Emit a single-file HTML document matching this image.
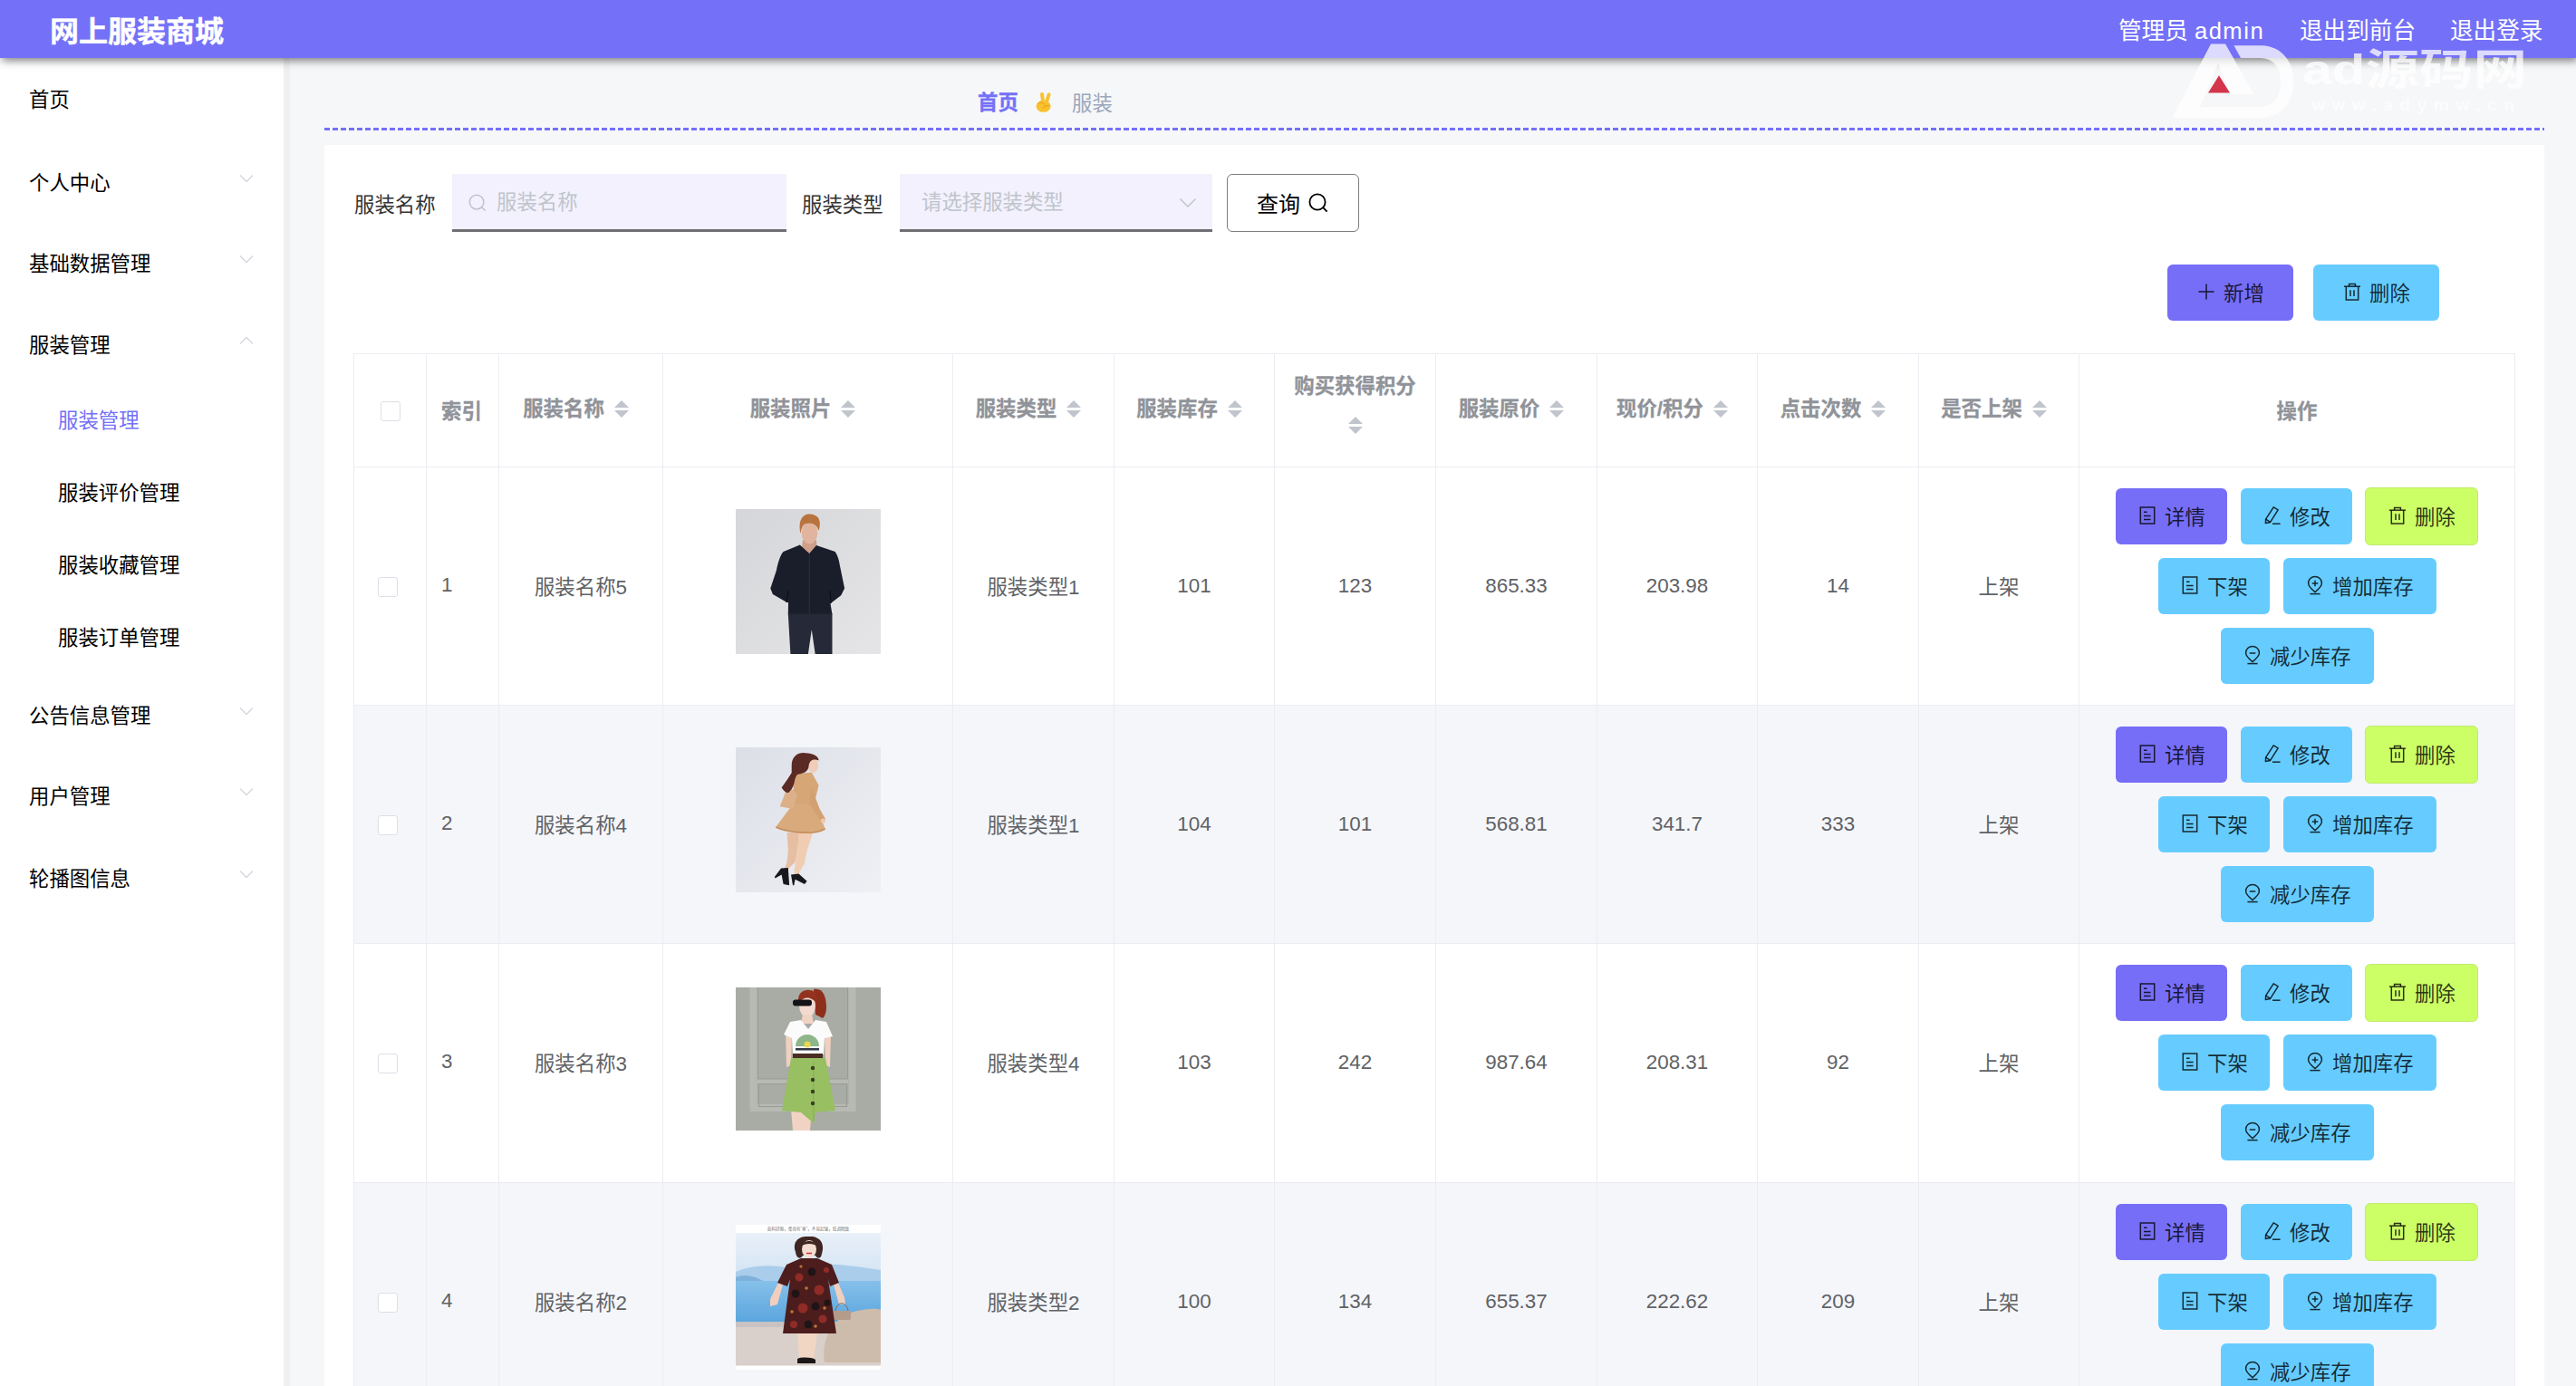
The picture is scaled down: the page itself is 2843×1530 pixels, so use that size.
<!DOCTYPE html>
<html lang="zh-CN"><head><meta charset="utf-8"><title>网上服装商城</title>
<style>
*{box-sizing:border-box;margin:0;padding:0}
html,body{background:#f6f7f9}
#page{position:relative;width:2843px;height:1530px;overflow:hidden;background:#f6f7f9}
body{font-family:"Liberation Sans","Noto Sans CJK SC",sans-serif;font-size:22.4px;color:#606266}
.abs{position:absolute;white-space:nowrap}
#hdr{position:absolute;left:0;top:0;width:2843px;height:64px;background:#7471f8;box-shadow:2px 3px 9px rgba(0,0,0,.5);z-index:5}
#title{left:55px;top:0;height:64px;line-height:70px;font-size:32px;font-weight:700;color:#fff;-webkit-text-stroke:.4px #fff}
.hr{top:0;height:64px;line-height:68px;font-size:25.6px;color:#fff}
#side{position:absolute;left:0;top:64px;width:313px;height:1466px;background:#fff}
#strip{position:absolute;left:313px;top:64px;width:7px;height:1466px;background:#f0f0f0}
.mi{left:32px;height:40px;line-height:40px;color:#000;font-size:22.4px}
.mi.sub{left:64px}
.mi.act{color:#7471f8}
.chev{position:absolute;left:264px;width:16px;height:10px}

.ic{display:inline-block;vertical-align:middle;flex:none}
#bc1{left:1079px;top:94px;height:40px;line-height:40px;font-weight:700;color:#7471f8;-webkit-text-stroke:.3px #7471f8}
#bc2{position:absolute;left:1143px;top:101px}
#bc3{left:1183px;top:94.5px;height:40px;line-height:40px;color:#9ba8bc}
#dash{position:absolute;left:358px;top:141px;width:2450px;height:3px;background:repeating-linear-gradient(90deg,#7471f8 0,#7471f8 6px,transparent 6px,transparent 9px)}
#card{position:absolute;left:358px;top:160px;width:2450px;height:1400px;background:#fff}
.lbl{top:207px;height:40px;line-height:40px;color:#333}
.inp{position:absolute;top:192px;height:64px;background:#f2f1fd;border-bottom:3px solid #707074;color:#c0c4cc;white-space:nowrap}
.inp span{position:absolute;top:12px;height:40px;line-height:40px}
#qbtn{position:absolute;left:1354px;top:192px;width:146px;height:64px;border:1px solid #7d7d7d;border-radius:6px;background:#fff;color:#000;font-size:24px}
.btn{position:absolute;height:62px;border-radius:6px;color:rgba(0,0,0,.8);display:flex;align-items:center;padding-left:24px;white-space:nowrap}
.btn .ic{margin-right:8px;position:relative;top:-1px}
.btn span,.tbtn span{position:relative;top:-1.5px}
.b1{background:#766ef7}.b2{background:#66ccff}.b3{background:#ccff66}

.vl{position:absolute;width:1px;background:#ebedf2;top:390px;height:1140px}
.hl{position:absolute;height:1px;background:#ebedf2;left:390px;width:2386px}
.stripe{position:absolute;left:391px;width:2384px;background:#f5f6fa}
.th{position:absolute;display:flex;align-items:center;justify-content:center;font-weight:700;color:#909399;white-space:nowrap;height:40px;line-height:42px;-webkit-text-stroke:.3px #909399}
.car{display:inline-block;position:relative;width:38px;height:40px;flex:none}
.car i{position:absolute;left:11px;width:0;height:0;border:8px solid transparent}
.car i.u{border-bottom-color:#c0c4cc;top:2px}
.car i.d{border-top-color:#c0c4cc;top:21px}
.td{position:absolute;text-align:center;height:40px;line-height:40px;white-space:nowrap;color:#606266}
.cb{position:absolute;width:22px;height:22px;border:1px solid #dcdfe6;border-radius:3px;background:#fff}
.pic{position:absolute;left:812px;width:160px;height:160px;overflow:hidden}
.tbtn{position:absolute;height:62px;border-radius:6px;color:rgba(0,0,0,.8);display:flex;align-items:center;padding-left:24px;white-space:nowrap}
.tbtn .ic{margin-right:8px;margin-left:0;position:relative;top:-1px}

#wm{position:absolute;left:2390px;top:44px;z-index:9;pointer-events:none}
</style></head>
<body>
<div id="page">
<div id="side">
 <div class="abs mi " style="top:27.0px">首页</div>
 <div class="abs mi " style="top:118.5px">个人中心</div>
 <svg class="chev" style="top:127.5px" viewBox="0 0 16 10"><path d="M1 1.5 L8 8.5 L15 1.5" fill="none" stroke="#d3d6dc" stroke-width="1.3"/></svg>
 <div class="abs mi " style="top:208.0px">基础数据管理</div>
 <svg class="chev" style="top:217.0px" viewBox="0 0 16 10"><path d="M1 1.5 L8 8.5 L15 1.5" fill="none" stroke="#d3d6dc" stroke-width="1.3"/></svg>
 <div class="abs mi " style="top:298.0px">服装管理</div>
 <svg class="chev" style="top:307.0px" viewBox="0 0 16 10"><path d="M1 8.5 L8 1.5 L15 8.5" fill="none" stroke="#d3d6dc" stroke-width="1.3"/></svg>
 <div class="abs mi sub act" style="top:381.0px">服装管理</div>
 <div class="abs mi sub" style="top:461.0px">服装评价管理</div>
 <div class="abs mi sub" style="top:541.0px">服装收藏管理</div>
 <div class="abs mi sub" style="top:621.0px">服装订单管理</div>
 <div class="abs mi " style="top:706.5px">公告信息管理</div>
 <svg class="chev" style="top:715.5px" viewBox="0 0 16 10"><path d="M1 1.5 L8 8.5 L15 1.5" fill="none" stroke="#d3d6dc" stroke-width="1.3"/></svg>
 <div class="abs mi " style="top:796.0px">用户管理</div>
 <svg class="chev" style="top:805.0px" viewBox="0 0 16 10"><path d="M1 1.5 L8 8.5 L15 1.5" fill="none" stroke="#d3d6dc" stroke-width="1.3"/></svg>
 <div class="abs mi " style="top:886.5px">轮播图信息</div>
 <svg class="chev" style="top:895.5px" viewBox="0 0 16 10"><path d="M1 1.5 L8 8.5 L15 1.5" fill="none" stroke="#d3d6dc" stroke-width="1.3"/></svg>
</div>
<div id="strip"></div>

<div class="abs" id="bc1">首页</div>
<svg id="bc2" width="18" height="23" viewBox="0 0 18 23"><g stroke="#f9c12e" stroke-width="3.900" stroke-linecap="round"><path d="M8.300 13 L7 3"/><path d="M11.500 13 L14.600 3.400"/></g><ellipse cx="8.600" cy="16.300" rx="8" ry="6.500" fill="#f9c12e"/><path d="M2.500 13.500 C5 11.500 8 12 9.500 14.500 M8 18.500 C9.500 16 12 15 15 16" fill="none" stroke="#e29a14" stroke-width="1"/></svg>
<div class="abs" id="bc3">服装</div>
<div id="dash"></div>
<div id="card"></div>
<div class="abs lbl" style="left:391px">服装名称</div>
<div class="inp" style="left:499px;width:369px"><svg class="ic" style="position:absolute;left:18px;top:22px" width="20" height="20" viewBox="0 0 22 22" style=""><g fill="none" stroke="#c0c4cc" stroke-width="1.7"><circle cx="10" cy="10" r="8.6"/><path d="M16.2 16.2 L20.6 20.6"/></g></svg><span style="left:49px">服装名称</span></div>
<div class="abs lbl" style="left:885px">服装类型</div>
<div class="inp" style="left:993px;width:345px"><span style="left:24px">请选择服装类型</span><svg style="position:absolute;left:308px;top:26px" width="20" height="12" viewBox="0 0 20 12"><path d="M1.5 1.5 L10 10 L18.5 1.5" fill="none" stroke="#c0c4cc" stroke-width="1.5"/></svg></div>
<div id="qbtn"><span class="abs" style="left:32px;top:12.5px;height:40px;line-height:40px">查询</span><svg class="ic" style="position:absolute;left:89px;top:20px" width="22" height="22" viewBox="0 0 22 22" style=""><g fill="none" stroke="#000" stroke-width="1.8"><circle cx="10" cy="10" r="8.6"/><path d="M16.2 16.2 L20.6 20.6"/></g></svg></div>
<div class="btn b1" style="left:2392px;top:292px;width:139px;padding-left:32px"><svg class="ic" width="22" height="22" viewBox="0 0 22 22" style=""><path d="M11 2.5V19.5M2.5 11H19.5" fill="none" stroke="rgba(0,0,0,.8)" stroke-width="1.5"/></svg><span>新增</span></div>
<div class="btn b2" style="left:2553px;top:292px;width:139px;padding-left:32px"><svg class="ic" width="22" height="22" viewBox="0 0 22 22" style=""><g fill="none" stroke="rgba(0,0,0,.8)" stroke-width="1.5"><path d="M2 5.2H20"/><path d="M7.6 5V2.4H14.4V5"/><path d="M4.3 5.4V20H17.7V5.4"/><path d="M9 9.3V16M13 9.3V16"/></g></svg><span>删除</span></div>
<div class="stripe" style="top:779px;height:262px"></div>
<div class="stripe" style="top:1306px;height:262px"></div>
<div class="vl" style="left:390px"></div><div class="vl" style="left:470px"></div><div class="vl" style="left:550px"></div><div class="vl" style="left:731px"></div><div class="vl" style="left:1051px"></div><div class="vl" style="left:1229px"></div><div class="vl" style="left:1406px"></div><div class="vl" style="left:1584px"></div><div class="vl" style="left:1762px"></div><div class="vl" style="left:1939px"></div><div class="vl" style="left:2117px"></div><div class="vl" style="left:2294px"></div><div class="vl" style="left:2775px"></div>
<div class="hl" style="top:390px"></div><div class="hl" style="top:515px"></div><div class="hl" style="top:778px"></div><div class="hl" style="top:1041px"></div><div class="hl" style="top:1305px"></div>
<div class="cb" style="left:420px;top:443px"></div>
<div class="th" style="left:487px;top:435px;justify-content:flex-start">索引</div>
<div class="th" style="left:551px;width:180px;top:431.5px"><span>服装名称</span><span class="car"><i class="u"></i><i class="d"></i></span></div>
<div class="th" style="left:732px;width:319px;top:431.5px"><span>服装照片</span><span class="car"><i class="u"></i><i class="d"></i></span></div>
<div class="th" style="left:1052px;width:177px;top:431.5px"><span>服装类型</span><span class="car"><i class="u"></i><i class="d"></i></span></div>
<div class="th" style="left:1230px;width:176px;top:431.5px"><span>服装库存</span><span class="car"><i class="u"></i><i class="d"></i></span></div>
<div class="th" style="left:1407px;width:177px;top:406.5px">购买获得积分</div>
<div class="th" style="left:1407px;width:177px;top:449.5px"><span class="car"><i class="u"></i><i class="d"></i></span></div>
<div class="th" style="left:1585px;width:177px;top:431.5px"><span>服装原价</span><span class="car"><i class="u"></i><i class="d"></i></span></div>
<div class="th" style="left:1763px;width:176px;top:431.5px"><span>现价/积分</span><span class="car"><i class="u"></i><i class="d"></i></span></div>
<div class="th" style="left:1940px;width:177px;top:431.5px"><span>点击次数</span><span class="car"><i class="u"></i><i class="d"></i></span></div>
<div class="th" style="left:2118px;width:176px;top:431.5px"><span>是否上架</span><span class="car"><i class="u"></i><i class="d"></i></span></div>
<div class="th" style="left:2295px;width:480px;top:435px">操作</div>
<div class="cb" style="left:417px;top:637px"></div>
<div class="td" style="left:487px;top:626px;text-align:left">1</div>
<div class="td" style="left:551px;width:180px;top:629px">服装名称5</div>
<div class="td" style="left:1052px;width:177px;top:629px">服装类型1</div>
<div class="td" style="left:1230px;width:176px;top:627.3px">101</div>
<div class="td" style="left:1407px;width:177px;top:627.3px">123</div>
<div class="td" style="left:1585px;width:177px;top:627.3px">865.33</div>
<div class="td" style="left:1763px;width:176px;top:627.3px">203.98</div>
<div class="td" style="left:1940px;width:177px;top:627.3px">14</div>
<div class="td" style="left:2118px;width:176px;top:629px">上架</div>
<div class="pic" style="top:562px;height:160px"><svg width="160" height="160" viewBox="0 0 160 160" preserveAspectRatio="none" style="display:block;width:100%;height:100%">
<defs><linearGradient id="g1" x1="0" y1="0" x2="1" y2="1"><stop offset="0" stop-color="#d5d6d9"/><stop offset="1" stop-color="#e5e5e7"/></linearGradient></defs>
<rect width="160" height="160" fill="url(#g1)"/>
<path d="M74 34 L89 34 L90 50 L72 50Z" fill="#cf9f8a"/>
<ellipse cx="81.500" cy="26" rx="8.800" ry="12.500" fill="#e0b49f"/>
<path d="M71.500 27 C68 10 76 5 82 5.600 C92 6 95 14 91.500 24 C90 17 84 14 77 16 C73 18 72.500 22 71.500 27Z" fill="#b8733f"/>
<path d="M70.800 39.400 L81.200 49 L89 40 L109.700 47.100 C113 52 114 57 115 62.700 L120.100 87.400 L116.200 95.200 L104.500 104.300 L106.500 116.600 L57.800 116.600 L58 103 L56.500 103 L40.900 93.900 L38.300 87.400 L44.800 67.900 C47 58 49 51 52.600 47.100 Z" fill="#1a1d2a"/>
<path d="M81.200 49 V116" stroke="#2a2f40" stroke-width="1"/>
<path d="M58 90 L56 103 M104 90 L105 104" stroke="#0e1018" stroke-width="1.200"/>
<path d="M57.800 115.600 H106.500 V160 H87.700 L83.800 132.900 L79.900 160 H60.400 Z" fill="#262937"/>
</svg></div>
<div class="tbtn b1" style="left:2335px;top:539px;width:123px"><svg class="ic" width="22" height="22" viewBox="0 0 22 22" style=""><g fill="none" stroke="rgba(0,0,0,.8)" stroke-width="1.5"><rect x="3.3" y="2" width="15.4" height="18"/><path d="M7 7.3H10.6M7 11.4H14.6M7 15.5H14.6"/></g></svg><span>详情</span></div>
<div class="tbtn b2" style="left:2473px;top:539px;width:123px"><svg class="ic" width="22" height="22" viewBox="0 0 22 22" style=""><g fill="none" stroke="rgba(0,0,0,.8)" stroke-width="1.5" stroke-linejoin="round"><path d="M12.2 1.8 L17.2 4.8 L8.6 18.4 L3.4 19.6 L3.6 15.2 Z"/><path d="M3.6 15.2 L8.6 18.4"/><path d="M11 20.2H19.6"/></g></svg><span>修改</span></div>
<div class="tbtn b3" style="left:2610px;top:538px;width:125px;height:64px;border:1px solid #c2ea6c"><svg class="ic" width="22" height="22" viewBox="0 0 22 22" style=""><g fill="none" stroke="rgba(0,0,0,.8)" stroke-width="1.5"><path d="M2 5.2H20"/><path d="M7.6 5V2.4H14.4V5"/><path d="M4.3 5.4V20H17.7V5.4"/><path d="M9 9.3V16M13 9.3V16"/></g></svg><span>删除</span></div>
<div class="tbtn b2" style="left:2382px;top:616px;width:123px"><svg class="ic" width="22" height="22" viewBox="0 0 22 22" style=""><g fill="none" stroke="rgba(0,0,0,.8)" stroke-width="1.5"><rect x="3.3" y="2" width="15.4" height="18"/><path d="M7 7.3H10.6M7 11.4H14.6M7 15.5H14.6"/></g></svg><span>下架</span></div>
<div class="tbtn b2" style="left:2520px;top:616px;width:168.5px"><svg class="ic" width="22" height="22" viewBox="0 0 22 22" style=""><g fill="none" stroke="rgba(0,0,0,.8)" stroke-width="1.5"><path d="M11 18.6 C7 15.4 3.6 12.6 3.6 8.8 A7.4 7.4 0 0 1 18.4 8.8 C18.4 12.6 15 15.4 11 18.6Z"/><path d="M11 5.7V12.3M7.7 9H14.3"/><path d="M5.4 20.6H16.6"/></g></svg><span>增加库存</span></div>
<div class="tbtn b2" style="left:2451px;top:693px;width:168.5px"><svg class="ic" width="22" height="22" viewBox="0 0 22 22" style=""><g fill="none" stroke="rgba(0,0,0,.8)" stroke-width="1.5"><path d="M11 18.6 C7 15.4 3.6 12.6 3.6 8.8 A7.4 7.4 0 0 1 18.4 8.8 C18.4 12.6 15 15.4 11 18.6Z"/><path d="M7.7 9H14.3"/><path d="M5.4 20.6H16.6"/></g></svg><span>减少库存</span></div>
<div class="cb" style="left:417px;top:900px"></div>
<div class="td" style="left:487px;top:889px;text-align:left">2</div>
<div class="td" style="left:551px;width:180px;top:892px">服装名称4</div>
<div class="td" style="left:1052px;width:177px;top:892px">服装类型1</div>
<div class="td" style="left:1230px;width:176px;top:890.3px">104</div>
<div class="td" style="left:1407px;width:177px;top:890.3px">101</div>
<div class="td" style="left:1585px;width:177px;top:890.3px">568.81</div>
<div class="td" style="left:1763px;width:176px;top:890.3px">341.7</div>
<div class="td" style="left:1940px;width:177px;top:890.3px">333</div>
<div class="td" style="left:2118px;width:176px;top:892px">上架</div>
<div class="pic" style="top:825px;height:160px"><svg width="160" height="160" viewBox="0 0 160 160" preserveAspectRatio="none" style="display:block;width:100%;height:100%">
<defs><linearGradient id="g2" x1="0" y1="0" x2="1" y2="1"><stop offset="0" stop-color="#dcdfe7"/><stop offset="1" stop-color="#eff0f4"/></linearGradient></defs>
<rect width="160" height="160" fill="url(#g2)"/>
<path d="M56.500 93.900 L70.800 93.900 L68.200 113.400 L65.600 126.400 L57.800 134.200 L53.900 134.200 L56.500 126.400 L57.800 113.400Z" fill="#e6bfa2"/>
<path d="M69.500 93.900 L85 93.900 L78.600 114.700 L76 127.700 L69.500 139.400 L64.300 139.400 L65.600 127.700 L68.200 114.700Z" fill="#f0cdb2"/>
<path d="M63 62.700 L87.700 62.700 L98.700 90 C90 95 80 94.500 70.800 93.900 C60 93 50 91 44.200 88 Z" fill="#d9aa7c"/>
<path d="M44.200 88 C50 91 60 93 70.800 93.900 C80 94.500 90 95 98.700 90" fill="none" stroke="#c48e5e" stroke-width="1.600"/>
<path d="M64.300 29 L83.800 27.700 L91.600 42 L87.700 57.500 L87.700 63 L63 63 L63 57.500 Z" fill="#d6a676"/>
<path d="M57.800 42 L68.200 52.300 L63 68 L48.700 65.300Z" fill="#dcb088"/>
<path d="M83.800 44.600 L92.700 68 L99.200 79.600 L94 80.900 L81.200 62.700Z" fill="#d3a171"/>
<circle cx="96.500" cy="81" r="2.600" fill="#eec9b0"/>
<ellipse cx="85.500" cy="20" rx="5.600" ry="8" fill="#f1cdb8"/>
<path d="M61.700 22 C61 9 70 5.500 76 6.200 C85 6 92 10 91.600 14.500 C86 12 81 14 80.500 21 C80 27 74 29 68 30 C64 34 66 42 60 48 C58 52 54 50 50.600 44.500 C54 40 58 34 61.700 28Z" fill="#5a2a24"/>
<path d="M50 133.500 L57.800 132.900 L59.100 152.300 L52.600 151 L50.600 140.600 L43.500 144.500 L42.900 143 Z" fill="#17171c"/>
<path d="M61 140.600 L69.500 139.400 L78.600 147.800 L76 151 L65.600 145.800 L64.300 152.300 L63 152.300 Z" fill="#17171c"/>
</svg></div>
<div class="tbtn b1" style="left:2335px;top:802px;width:123px"><svg class="ic" width="22" height="22" viewBox="0 0 22 22" style=""><g fill="none" stroke="rgba(0,0,0,.8)" stroke-width="1.5"><rect x="3.3" y="2" width="15.4" height="18"/><path d="M7 7.3H10.6M7 11.4H14.6M7 15.5H14.6"/></g></svg><span>详情</span></div>
<div class="tbtn b2" style="left:2473px;top:802px;width:123px"><svg class="ic" width="22" height="22" viewBox="0 0 22 22" style=""><g fill="none" stroke="rgba(0,0,0,.8)" stroke-width="1.5" stroke-linejoin="round"><path d="M12.2 1.8 L17.2 4.8 L8.6 18.4 L3.4 19.6 L3.6 15.2 Z"/><path d="M3.6 15.2 L8.6 18.4"/><path d="M11 20.2H19.6"/></g></svg><span>修改</span></div>
<div class="tbtn b3" style="left:2610px;top:801px;width:125px;height:64px;border:1px solid #c2ea6c"><svg class="ic" width="22" height="22" viewBox="0 0 22 22" style=""><g fill="none" stroke="rgba(0,0,0,.8)" stroke-width="1.5"><path d="M2 5.2H20"/><path d="M7.6 5V2.4H14.4V5"/><path d="M4.3 5.4V20H17.7V5.4"/><path d="M9 9.3V16M13 9.3V16"/></g></svg><span>删除</span></div>
<div class="tbtn b2" style="left:2382px;top:879px;width:123px"><svg class="ic" width="22" height="22" viewBox="0 0 22 22" style=""><g fill="none" stroke="rgba(0,0,0,.8)" stroke-width="1.5"><rect x="3.3" y="2" width="15.4" height="18"/><path d="M7 7.3H10.6M7 11.4H14.6M7 15.5H14.6"/></g></svg><span>下架</span></div>
<div class="tbtn b2" style="left:2520px;top:879px;width:168.5px"><svg class="ic" width="22" height="22" viewBox="0 0 22 22" style=""><g fill="none" stroke="rgba(0,0,0,.8)" stroke-width="1.5"><path d="M11 18.6 C7 15.4 3.6 12.6 3.6 8.8 A7.4 7.4 0 0 1 18.4 8.8 C18.4 12.6 15 15.4 11 18.6Z"/><path d="M11 5.7V12.3M7.7 9H14.3"/><path d="M5.4 20.6H16.6"/></g></svg><span>增加库存</span></div>
<div class="tbtn b2" style="left:2451px;top:956px;width:168.5px"><svg class="ic" width="22" height="22" viewBox="0 0 22 22" style=""><g fill="none" stroke="rgba(0,0,0,.8)" stroke-width="1.5"><path d="M11 18.6 C7 15.4 3.6 12.6 3.6 8.8 A7.4 7.4 0 0 1 18.4 8.8 C18.4 12.6 15 15.4 11 18.6Z"/><path d="M7.7 9H14.3"/><path d="M5.4 20.6H16.6"/></g></svg><span>减少库存</span></div>
<div class="cb" style="left:417px;top:1163px"></div>
<div class="td" style="left:487px;top:1152px;text-align:left">3</div>
<div class="td" style="left:551px;width:180px;top:1155px">服装名称3</div>
<div class="td" style="left:1052px;width:177px;top:1155px">服装类型4</div>
<div class="td" style="left:1230px;width:176px;top:1153.3px">103</div>
<div class="td" style="left:1407px;width:177px;top:1153.3px">242</div>
<div class="td" style="left:1585px;width:177px;top:1153.3px">987.64</div>
<div class="td" style="left:1763px;width:176px;top:1153.3px">208.31</div>
<div class="td" style="left:1940px;width:177px;top:1153.3px">92</div>
<div class="td" style="left:2118px;width:176px;top:1155px">上架</div>
<div class="pic" style="top:1090px;height:158px"><svg width="160" height="158" viewBox="0 0 160 158" preserveAspectRatio="none" style="display:block;width:100%;height:100%">
<rect width="160" height="158" fill="#a8aca5"/>
<rect x="19.500" y="-10" width="109" height="143" fill="none" stroke="#b6bab3" stroke-width="8"/>
<path d="M24 103.500 H124" stroke="#b6bab3" stroke-width="5"/>
<rect x="24.500" y="-10" width="99" height="111" fill="none" stroke="#979b94" stroke-width="1"/>
<rect x="25.500" y="106.500" width="97" height="25" fill="none" stroke="#979b94" stroke-width="1"/>
<path d="M61 134 H84 L82 158 H63Z" fill="#f1d3c4"/>
<path d="M55 50 L62 50 L61 86 L56 88Z M98 50 L105 52 L104 88 L99 86Z" fill="#f0d0c0"/>
<path d="M86 2 C96 0 100 10 100 22 C100 28 98 32 96 34 L88 30Z" fill="#8e2f1c"/>
<ellipse cx="79" cy="20" rx="9" ry="13" fill="#f3d9cf"/>
<path d="M69 14 C69 2 82 0 88 6 C90 10 90 14 88 16 C82 10 76 10 70 16Z" fill="#93321f"/>
<path d="M74 30 L84 30 L86 40 L72 40Z" fill="#f1d3c4"/>
<rect x="63" y="13.500" width="21" height="7" rx="3" fill="#141418"/>
<path d="M53 52 L60 38 L72 36 L80 46 L88 36 L100 38 L107 54 L98 56 L97 74 H63 L62 56 Z" fill="#fbfbfb"/>
<path d="M66 65 A13 13 0 0 1 92 65Z" fill="#8fb58a"/>
<circle cx="79" cy="63" r="3.500" fill="#e8d84a"/>
<rect x="66" y="67" width="26" height="2.500" fill="#333a4a"/>
<rect x="63" y="73" width="33" height="5" fill="#4a2d23"/>
<path d="M61 78 H99 L110 136 L88 138 L86 150 L72 138 L51 136 Z" fill="#98bf62"/>
<path d="M86 82 V148" stroke="#86ad52" stroke-width="1"/>
<g fill="#36401f"><circle cx="85" cy="89" r="2.200"/><circle cx="85" cy="102" r="2.200"/><circle cx="85" cy="115" r="2.200"/><circle cx="85" cy="128" r="2.200"/></g>
</svg></div>
<div class="tbtn b1" style="left:2335px;top:1065px;width:123px"><svg class="ic" width="22" height="22" viewBox="0 0 22 22" style=""><g fill="none" stroke="rgba(0,0,0,.8)" stroke-width="1.5"><rect x="3.3" y="2" width="15.4" height="18"/><path d="M7 7.3H10.6M7 11.4H14.6M7 15.5H14.6"/></g></svg><span>详情</span></div>
<div class="tbtn b2" style="left:2473px;top:1065px;width:123px"><svg class="ic" width="22" height="22" viewBox="0 0 22 22" style=""><g fill="none" stroke="rgba(0,0,0,.8)" stroke-width="1.5" stroke-linejoin="round"><path d="M12.2 1.8 L17.2 4.8 L8.6 18.4 L3.4 19.6 L3.6 15.2 Z"/><path d="M3.6 15.2 L8.6 18.4"/><path d="M11 20.2H19.6"/></g></svg><span>修改</span></div>
<div class="tbtn b3" style="left:2610px;top:1064px;width:125px;height:64px;border:1px solid #c2ea6c"><svg class="ic" width="22" height="22" viewBox="0 0 22 22" style=""><g fill="none" stroke="rgba(0,0,0,.8)" stroke-width="1.5"><path d="M2 5.2H20"/><path d="M7.6 5V2.4H14.4V5"/><path d="M4.3 5.4V20H17.7V5.4"/><path d="M9 9.3V16M13 9.3V16"/></g></svg><span>删除</span></div>
<div class="tbtn b2" style="left:2382px;top:1142px;width:123px"><svg class="ic" width="22" height="22" viewBox="0 0 22 22" style=""><g fill="none" stroke="rgba(0,0,0,.8)" stroke-width="1.5"><rect x="3.3" y="2" width="15.4" height="18"/><path d="M7 7.3H10.6M7 11.4H14.6M7 15.5H14.6"/></g></svg><span>下架</span></div>
<div class="tbtn b2" style="left:2520px;top:1142px;width:168.5px"><svg class="ic" width="22" height="22" viewBox="0 0 22 22" style=""><g fill="none" stroke="rgba(0,0,0,.8)" stroke-width="1.5"><path d="M11 18.6 C7 15.4 3.6 12.6 3.6 8.8 A7.4 7.4 0 0 1 18.4 8.8 C18.4 12.6 15 15.4 11 18.6Z"/><path d="M11 5.7V12.3M7.7 9H14.3"/><path d="M5.4 20.6H16.6"/></g></svg><span>增加库存</span></div>
<div class="tbtn b2" style="left:2451px;top:1219px;width:168.5px"><svg class="ic" width="22" height="22" viewBox="0 0 22 22" style=""><g fill="none" stroke="rgba(0,0,0,.8)" stroke-width="1.5"><path d="M11 18.6 C7 15.4 3.6 12.6 3.6 8.8 A7.4 7.4 0 0 1 18.4 8.8 C18.4 12.6 15 15.4 11 18.6Z"/><path d="M7.7 9H14.3"/><path d="M5.4 20.6H16.6"/></g></svg><span>减少库存</span></div>
<div class="cb" style="left:417px;top:1427px"></div>
<div class="td" style="left:487px;top:1416px;text-align:left">4</div>
<div class="td" style="left:551px;width:180px;top:1419px">服装名称2</div>
<div class="td" style="left:1052px;width:177px;top:1419px">服装类型2</div>
<div class="td" style="left:1230px;width:176px;top:1417.3px">100</div>
<div class="td" style="left:1407px;width:177px;top:1417.3px">134</div>
<div class="td" style="left:1585px;width:177px;top:1417.3px">655.37</div>
<div class="td" style="left:1763px;width:176px;top:1417.3px">222.62</div>
<div class="td" style="left:1940px;width:177px;top:1417.3px">209</div>
<div class="td" style="left:2118px;width:176px;top:1419px">上架</div>
<div class="pic" style="top:1352px;height:160px"><svg width="160" height="160" viewBox="0 0 160 160" preserveAspectRatio="none" style="display:block;width:100%;height:100%">
<defs><linearGradient id="g4s" x1="0" y1="0" x2="0" y2="1"><stop offset="0" stop-color="#e9f0f8"/><stop offset="1" stop-color="#d3e4f4"/></linearGradient>
<linearGradient id="g4w" x1="0" y1="0" x2="0" y2="1"><stop offset="0" stop-color="#86c0ea"/><stop offset="1" stop-color="#5aa5de"/></linearGradient></defs>
<rect width="160" height="160" fill="#fff"/>
<text x="80" y="5.800" font-size="4.600" fill="#777" text-anchor="middle" font-family="'Liberation Sans','Noto Sans CJK SC',sans-serif">面料舒服，柔而有“垂”，不易起皱，低调精致</text>
<rect y="9" width="160" height="48" fill="url(#g4s)"/>
<path d="M0 52 C20 44 40 44 60 48 C90 40 120 44 160 50 V62 H0Z" fill="#a9cdea"/>
<path d="M0 58 C10 54 20 56 30 62 H0Z" fill="#7fb1dc"/>
<rect y="62" width="160" height="46" fill="url(#g4w)"/>
<rect y="107" width="160" height="48.500" fill="#d9d0cb"/>
<rect y="107" width="160" height="6" fill="#c8c3c2"/>
<path d="M98 152 C94 130 104 104 130 96 C146 92 156 92 160 94 V152Z" fill="#cdbcab"/>
<path d="M68 120 H90 L86 148 H70Z" fill="#f1d6c4"/>
<path d="M68 148 C72 146 84 146 88 149 L88 153 H68Z" fill="#1d1718"/>
<path d="M47 64 L52 66 L46 88 L38 90 L38 82Z M113 64 L108 66 L114 88 L121 88 L120 80Z" fill="#f0cfbf"/>
<rect x="107" y="95" width="20" height="10" rx="2" fill="#b59c8a"/>
<path d="M110 95 C112 84 122 84 124 95" fill="none" stroke="#7a6a60" stroke-width="1"/>
<path d="M66 30 C62 18 70 12 81 13 C92 12 99 20 95 32 C94 38 90 38 88 34 L74 34 C72 38 67 38 66 30Z" fill="#3f2622"/>
<ellipse cx="81" cy="27" rx="8" ry="10" fill="#f4dcd0"/>
<path d="M72 24 C74 16 88 16 90 24 C86 20 76 20 72 24Z" fill="#3f2622"/>
<path d="M78 31.500 H84" stroke="#c82a2a" stroke-width="1.400"/>
<path d="M72 37 L90 37 L106 44 L114 64 L104 68 L102 60 L111 120 L52 120 L60 60 L57 68 L46 64 L56 44 Z" fill="#4d1d1e"/>
<g fill="#8f2c27"><circle cx="70" cy="58" r="4.500"/><circle cx="92" cy="72" r="5.500"/><circle cx="74" cy="92" r="5.500"/><circle cx="96" cy="104" r="4.500"/><circle cx="64" cy="110" r="4"/><circle cx="100" cy="50" r="3"/></g>
<g fill="#1f1416"><circle cx="84" cy="52" r="4.500"/><circle cx="66" cy="76" r="4.500"/><circle cx="88" cy="90" r="4.500"/><circle cx="80" cy="110" r="4.500"/><circle cx="101" cy="86" r="3.500"/></g>
<g fill="#b8783a"><circle cx="78" cy="70" r="1.800"/><circle cx="98" cy="92" r="1.800"/><circle cx="62" cy="96" r="1.800"/><circle cx="88" cy="112" r="1.800"/><circle cx="72" cy="46" r="1.600"/></g>
</svg></div>
<div class="tbtn b1" style="left:2335px;top:1329px;width:123px"><svg class="ic" width="22" height="22" viewBox="0 0 22 22" style=""><g fill="none" stroke="rgba(0,0,0,.8)" stroke-width="1.5"><rect x="3.3" y="2" width="15.4" height="18"/><path d="M7 7.3H10.6M7 11.4H14.6M7 15.5H14.6"/></g></svg><span>详情</span></div>
<div class="tbtn b2" style="left:2473px;top:1329px;width:123px"><svg class="ic" width="22" height="22" viewBox="0 0 22 22" style=""><g fill="none" stroke="rgba(0,0,0,.8)" stroke-width="1.5" stroke-linejoin="round"><path d="M12.2 1.8 L17.2 4.8 L8.6 18.4 L3.4 19.6 L3.6 15.2 Z"/><path d="M3.6 15.2 L8.6 18.4"/><path d="M11 20.2H19.6"/></g></svg><span>修改</span></div>
<div class="tbtn b3" style="left:2610px;top:1328px;width:125px;height:64px;border:1px solid #c2ea6c"><svg class="ic" width="22" height="22" viewBox="0 0 22 22" style=""><g fill="none" stroke="rgba(0,0,0,.8)" stroke-width="1.5"><path d="M2 5.2H20"/><path d="M7.6 5V2.4H14.4V5"/><path d="M4.3 5.4V20H17.7V5.4"/><path d="M9 9.3V16M13 9.3V16"/></g></svg><span>删除</span></div>
<div class="tbtn b2" style="left:2382px;top:1406px;width:123px"><svg class="ic" width="22" height="22" viewBox="0 0 22 22" style=""><g fill="none" stroke="rgba(0,0,0,.8)" stroke-width="1.5"><rect x="3.3" y="2" width="15.4" height="18"/><path d="M7 7.3H10.6M7 11.4H14.6M7 15.5H14.6"/></g></svg><span>下架</span></div>
<div class="tbtn b2" style="left:2520px;top:1406px;width:168.5px"><svg class="ic" width="22" height="22" viewBox="0 0 22 22" style=""><g fill="none" stroke="rgba(0,0,0,.8)" stroke-width="1.5"><path d="M11 18.6 C7 15.4 3.6 12.6 3.6 8.8 A7.4 7.4 0 0 1 18.4 8.8 C18.4 12.6 15 15.4 11 18.6Z"/><path d="M11 5.7V12.3M7.7 9H14.3"/><path d="M5.4 20.6H16.6"/></g></svg><span>增加库存</span></div>
<div class="tbtn b2" style="left:2451px;top:1483px;width:168.5px"><svg class="ic" width="22" height="22" viewBox="0 0 22 22" style=""><g fill="none" stroke="rgba(0,0,0,.8)" stroke-width="1.5"><path d="M11 18.6 C7 15.4 3.6 12.6 3.6 8.8 A7.4 7.4 0 0 1 18.4 8.8 C18.4 12.6 15 15.4 11 18.6Z"/><path d="M7.7 9H14.3"/><path d="M5.4 20.6H16.6"/></g></svg><span>减少库存</span></div>

<div id="hdr">
 <div class="abs" id="title">网上服装商城</div>
 <div class="abs hr" style="left:2338px">管理员 <span style="letter-spacing:1.5px">admin</span></div>
 <div class="abs hr" style="left:2538px">退出到前台</div>
 <div class="abs hr" style="left:2704px">退出登录</div>
</div>
<svg id="wm" width="420" height="96" viewBox="0 0 420 96">
<g fill="#fff" fill-opacity=".75"><path d="M7.5 86.0 L50.0 4.4 66.0 4.4 97.5 60.0 72.0 60.0 58.0 26.0 33.0 86.0Z"/><path d="M75.5 6.2 L106.0 6.2 C129.0 7.0 141.6 25.0 141.6 46.6 C141.6 68.0 128.0 86.0 106.0 86.0 L33.0 86.0 L38.0 74.0 L104.0 74.0 C120.0 74.0 127.0 61.0 127.0 46.6 C127.0 32.0 120.0 20.0 104.0 20.0 L83.0 20.0Z"/></g>
<path d="M59.0 39.3 L71.0 58.5 L47.0 58.5Z" fill="#d4354a"/>
<text x="151" y="49" font-size="47" font-weight="700" fill="#fff" fill-opacity=".75" font-family="'Liberation Sans','Noto Sans CJK SC',sans-serif" textLength="248" lengthAdjust="spacingAndGlyphs" style="-webkit-text-stroke:1px rgba(255,255,255,.75)">ad源码网</text>
<text x="161" y="78" font-size="19" font-weight="700" fill="#fff" fill-opacity=".7" font-family="'Liberation Sans',sans-serif" textLength="224" lengthAdjust="spacing">www.adymw.cn</text>
</svg>
</div>
</body></html>
